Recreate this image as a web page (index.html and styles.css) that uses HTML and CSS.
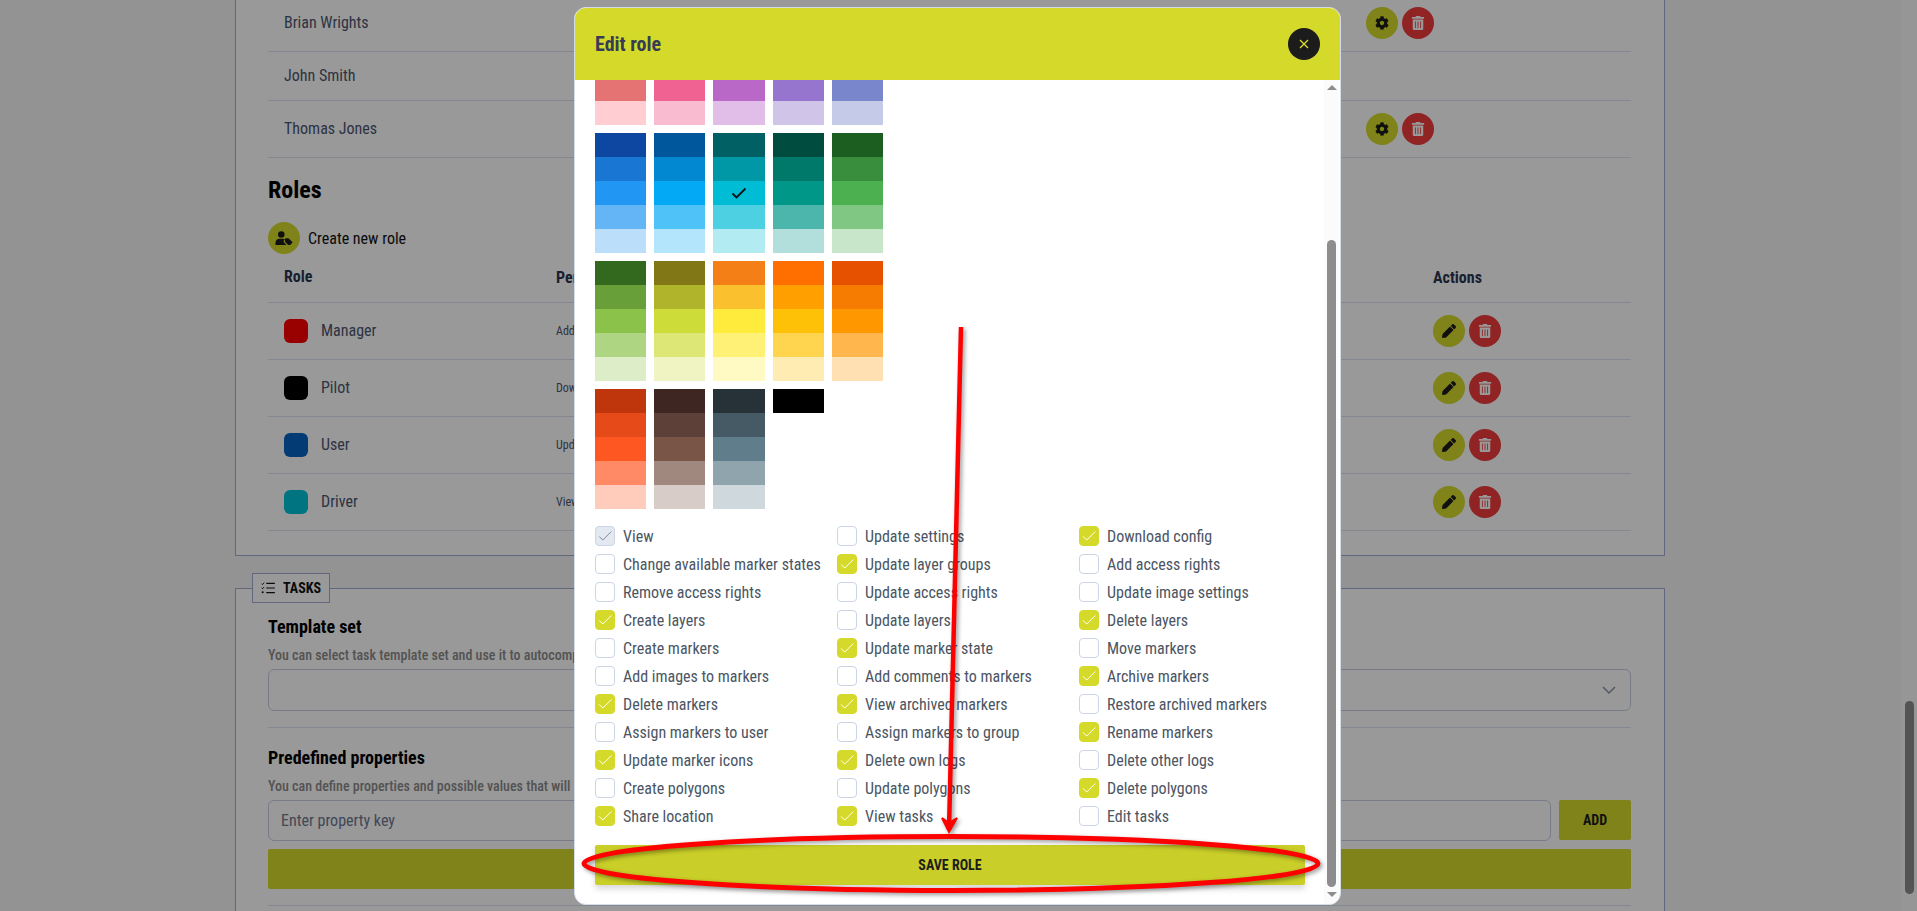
FILE: index.html
```html
<!DOCTYPE html>
<html lang="en">
<head>
  <meta charset="UTF-8" />
  <meta name="viewport" content="width=device-width, initial-scale=1" />
  <title>Edit role</title>
  <link rel="stylesheet" href="styles.css">
</head>
<body>

  <svg class="icon-defs" width="0" height="0">
    <symbol id="i-cog" viewBox="0 0 512 512"><path d="M487.4 315.7l-42.6-24.6c4.3-23.2 4.3-47 0-70.2l42.6-24.6c4.9-2.8 7.1-8.6 5.5-14-11.1-35.6-30-67.8-54.7-94.6-3.8-4.1-10-5.1-14.8-2.3L380.8 110c-17.9-15.4-38.5-27.3-60.8-35.1V25.8c0-5.6-3.9-10.5-9.4-11.7-36.7-8.2-74.3-7.8-109.2 0-5.5 1.2-9.4 6.1-9.4 11.7V75c-22.2 7.9-42.8 19.8-60.8 35.1L88.7 85.5c-4.9-2.8-11-1.9-14.8 2.3-24.7 26.7-43.6 58.9-54.7 94.6-1.7 5.4.6 11.2 5.5 14L67.3 221c-4.3 23.2-4.3 47 0 70.2l-42.6 24.6c-4.9 2.8-7.1 8.6-5.5 14 11.1 35.6 30 67.8 54.7 94.6 3.8 4.1 10 5.1 14.8 2.3l42.6-24.6c17.9 15.4 38.5 27.3 60.8 35.1v49.2c0 5.6 3.9 10.5 9.4 11.7 36.7 8.2 74.3 7.8 109.2 0 5.5-1.2 9.4-6.1 9.4-11.7v-49.2c22.2-7.9 42.8-19.8 60.8-35.1l42.6 24.6c4.9 2.8 11 1.9 14.8-2.3 24.7-26.7 43.6-58.9 54.7-94.6 1.5-5.5-.7-11.3-5.6-14.1zM256 336c-44.1 0-80-35.9-80-80s35.9-80 80-80 80 35.9 80 80-35.9 80-80 80z"/></symbol>
    <symbol id="i-trash" viewBox="0 0 448 512"><path d="M32 464a48 48 0 0 0 48 48h288a48 48 0 0 0 48-48V128H32zm272-256a16 16 0 0 1 32 0v224a16 16 0 0 1-32 0zm-96 0a16 16 0 0 1 32 0v224a16 16 0 0 1-32 0zm-96 0a16 16 0 0 1 32 0v224a16 16 0 0 1-32 0zM432 32H312l-9.4-18.7A24 24 0 0 0 281.1 0H166.8a23.72 23.72 0 0 0-21.4 13.3L136 32H16A16 16 0 0 0 0 48v32a16 16 0 0 0 16 16h416a16 16 0 0 0 16-16V48a16 16 0 0 0-16-16z"/></symbol>
    <symbol id="i-pen" viewBox="0 0 512 512"><path d="M497.9 142.1l-46.1 46.1c-4.7 4.7-12.3 4.7-17 0l-111-111c-4.7-4.7-4.7-12.3 0-17l46.1-46.1c18.7-18.7 49.1-18.7 67.9 0l60.1 60.1c18.8 18.7 18.8 49.1 0 67.9zM284.2 99.8L21.6 362.4.4 483.9c-2.9 16.4 11.4 30.6 27.8 27.8l121.5-21.3 262.6-262.6c4.7-4.7 4.7-12.3 0-17l-111-111c-4.8-4.7-12.4-4.7-17.1 0z"/></symbol>
    <symbol id="i-check" viewBox="0 0 20 20"><path d="M3.5 10.5l4 4L17 5" fill="none" stroke="currentColor" stroke-width="1.1"/></symbol>
  </svg>

  <div class="page">
    <div class="page-main">
      <div class="section section-top">
        <div class="row user-row row-cut">
          <div class="cell-name">Brian Wrights</div>
          <div class="actions">
            <span class="btn-round btn-olive"><svg class="ic"><use href="#i-cog"/></svg></span>
            <span class="btn-round btn-red"><svg class="ic"><use href="#i-trash"/></svg></span>
          </div>
        </div>
        <div class="row user-row row-plain">
          <div class="cell-name">John Smith</div>
        </div>
        <div class="row user-row">
          <div class="cell-name">Thomas Jones</div>
          <div class="actions">
            <span class="btn-round btn-olive"><svg class="ic"><use href="#i-cog"/></svg></span>
            <span class="btn-round btn-red"><svg class="ic"><use href="#i-trash"/></svg></span>
          </div>
        </div>

        <h2 class="roles-title">Roles</h2>
        <div class="create-role">
          <span class="btn-round btn-olive">
            <svg class="ic ic-user" viewBox="0 0 22 18">
              <circle cx="7.5" cy="4.5" r="4.2"/>
              <path d="M0 18v-2.5C0 12 2.5 10 5.5 10h4c1 0 2 .3 2.8.8l-1.2 1.2c-.8.8-.8 2 0 2.8l3 3.2z"/>
              <path d="M12.6 9.2h4.2l4.6 4.6c.5.5.5 1.2 0 1.7l-2.9 2.9c-.5.5-1.2.5-1.7 0l-4.6-4.6z"/>
            </svg>
          </span>
          Create new role
        </div>

        <div class="row role-row role-head">
          <div class="cell-name">Role</div>
          <div>Permissions</div>
          <div>Actions</div>
        </div>
        <div class="row role-row">
          <div class="cell-name cell-role"><span class="role-color role-manager"></span>Manager</div>
          <div class="cell-perm">Add access rights</div>
          <div class="actions">
            <span class="btn-round btn-olive"><svg class="ic"><use href="#i-pen"/></svg></span>
            <span class="btn-round btn-red"><svg class="ic"><use href="#i-trash"/></svg></span>
          </div>
        </div>
        <div class="row role-row">
          <div class="cell-name cell-role"><span class="role-color role-pilot"></span>Pilot</div>
          <div class="cell-perm">Download config</div>
          <div class="actions">
            <span class="btn-round btn-olive"><svg class="ic"><use href="#i-pen"/></svg></span>
            <span class="btn-round btn-red"><svg class="ic"><use href="#i-trash"/></svg></span>
          </div>
        </div>
        <div class="row role-row">
          <div class="cell-name cell-role"><span class="role-color role-user"></span>User</div>
          <div class="cell-perm">Update layers</div>
          <div class="actions">
            <span class="btn-round btn-olive"><svg class="ic"><use href="#i-pen"/></svg></span>
            <span class="btn-round btn-red"><svg class="ic"><use href="#i-trash"/></svg></span>
          </div>
        </div>
        <div class="row role-row">
          <div class="cell-name cell-role"><span class="role-color role-driver"></span>Driver</div>
          <div class="cell-perm">View tasks</div>
          <div class="actions">
            <span class="btn-round btn-olive"><svg class="ic"><use href="#i-pen"/></svg></span>
            <span class="btn-round btn-red"><svg class="ic"><use href="#i-trash"/></svg></span>
          </div>
        </div>
      </div>

      <div class="section section-tasks">
        <div class="legend">
          <svg class="legend-icon" viewBox="0 0 16 14">
            <path d="M.5 2l1 1L3.5.8M.5 7l1 1 2-2.2" fill="none" stroke="currentColor" stroke-width="1.1"/>
            <circle cx="1.8" cy="12" r="1.2"/>
            <path d="M6 1.5h10M6 7h10M6 12.5h10" fill="none" stroke="currentColor" stroke-width="1.4"/>
          </svg>
          TASKS
        </div>
        <h3>Template set</h3>
        <p class="hint">You can select task template set and use it to autocomplete tasks</p>
        <div class="select">
          <svg width="14" height="9" viewBox="0 0 14 9"><path d="M1 1l6 6 6-6" fill="none" stroke="#8a93a8" stroke-width="1.5"/></svg>
        </div>
        <div class="divider"></div>
        <h3 class="h3-next">Predefined properties</h3>
        <p class="hint">You can define properties and possible values that will be used</p>
        <div class="prop-row">
          <input class="prop-input" type="text" placeholder="Enter property key">
          <button class="btn-add">ADD</button>
        </div>
        <div class="btn-wide"></div>
        <div class="divider"></div>
      </div>
    </div>
    <div class="page-scrollbar"><div class="page-thumb"></div></div>
  </div>

  <div class="overlay"></div>

  <div class="modal">
    <div class="modal-head">
      <span class="modal-title">Edit role</span>
      <span class="modal-close">
        <svg width="10" height="10" viewBox="0 0 10 10"><path d="M1 1l8 8M9 1l-8 8" stroke="#d5da2a" stroke-width="1.4"/></svg>
      </span>
    </div>
    <div class="modal-main">
      <div class="modal-body">
        <div class="swatches">
          <div class="swatch sw-red"></div>
          <div class="swatch sw-pink"></div>
          <div class="swatch sw-purple"></div>
          <div class="swatch sw-deep-purple"></div>
          <div class="swatch sw-indigo"></div>
          <div class="swatch sw-blue"></div>
          <div class="swatch sw-light-blue"></div>
          <div class="swatch sw-cyan"><svg class="swatch-check" width="16" height="12" viewBox="0 0 16 12"><path d="M1.5 6.5l4 4L14.5 1.5" fill="none" stroke="#111" stroke-width="1.8"/></svg></div>
          <div class="swatch sw-teal"></div>
          <div class="swatch sw-green"></div>
          <div class="swatch sw-light-green"></div>
          <div class="swatch sw-lime"></div>
          <div class="swatch sw-yellow"></div>
          <div class="swatch sw-amber"></div>
          <div class="swatch sw-orange"></div>
          <div class="swatch sw-deep-orange"></div>
          <div class="swatch sw-brown"></div>
          <div class="swatch sw-blue-grey"></div>
          <div class="swatch-black"></div>
        </div>

        <div class="perms">
          <label class="perm"><span class="box box-off"><svg><use href="#i-check"/></svg></span>View</label>
          <label class="perm"><span class="box"></span>Update settings</label>
          <label class="perm"><span class="box box-on"><svg><use href="#i-check"/></svg></span>Download config</label>

          <label class="perm"><span class="box"></span>Change available marker states</label>
          <label class="perm"><span class="box box-on"><svg><use href="#i-check"/></svg></span>Update layer groups</label>
          <label class="perm"><span class="box"></span>Add access rights</label>

          <label class="perm"><span class="box"></span>Remove access rights</label>
          <label class="perm"><span class="box"></span>Update access rights</label>
          <label class="perm"><span class="box"></span>Update image settings</label>

          <label class="perm"><span class="box box-on"><svg><use href="#i-check"/></svg></span>Create layers</label>
          <label class="perm"><span class="box"></span>Update layers</label>
          <label class="perm"><span class="box box-on"><svg><use href="#i-check"/></svg></span>Delete layers</label>

          <label class="perm"><span class="box"></span>Create markers</label>
          <label class="perm"><span class="box box-on"><svg><use href="#i-check"/></svg></span>Update marker state</label>
          <label class="perm"><span class="box"></span>Move markers</label>

          <label class="perm"><span class="box"></span>Add images to markers</label>
          <label class="perm"><span class="box"></span>Add comments to markers</label>
          <label class="perm"><span class="box box-on"><svg><use href="#i-check"/></svg></span>Archive markers</label>

          <label class="perm"><span class="box box-on"><svg><use href="#i-check"/></svg></span>Delete markers</label>
          <label class="perm"><span class="box box-on"><svg><use href="#i-check"/></svg></span>View archived markers</label>
          <label class="perm"><span class="box"></span>Restore archived markers</label>

          <label class="perm"><span class="box"></span>Assign markers to user</label>
          <label class="perm"><span class="box"></span>Assign markers to group</label>
          <label class="perm"><span class="box box-on"><svg><use href="#i-check"/></svg></span>Rename markers</label>

          <label class="perm"><span class="box box-on"><svg><use href="#i-check"/></svg></span>Update marker icons</label>
          <label class="perm"><span class="box box-on"><svg><use href="#i-check"/></svg></span>Delete own logs</label>
          <label class="perm"><span class="box"></span>Delete other logs</label>

          <label class="perm"><span class="box"></span>Create polygons</label>
          <label class="perm"><span class="box"></span>Update polygons</label>
          <label class="perm"><span class="box box-on"><svg><use href="#i-check"/></svg></span>Delete polygons</label>

          <label class="perm"><span class="box box-on"><svg><use href="#i-check"/></svg></span>Share location</label>
          <label class="perm"><span class="box box-on"><svg><use href="#i-check"/></svg></span>View tasks</label>
          <label class="perm"><span class="box"></span>Edit tasks</label>
        </div>

        <button class="btn-save">SAVE ROLE</button>
      </div>
      <div class="modal-scrollbar">
        <span class="arrow-up"></span>
        <div class="modal-thumb"></div>
        <span class="arrow-down"></span>
      </div>
    </div>
  </div>

  <!-- red marks drawn over the screenshot -->
  <svg class="marks" width="1917" height="911" viewBox="0 0 1917 911">
    <ellipse cx="951" cy="863.5" rx="367" ry="27" fill="none" stroke="#f00" stroke-width="5"/>
    <path d="M961 327L949 830" fill="none" stroke="#f00" stroke-width="4.5"/>
    <path d="M942 818l7 14 8-14-8 5z" fill="#f00" stroke="#f00" stroke-width="2"/>
  </svg>

</body>
</html>
```

FILE: styles.css
```css
* {
  box-sizing: border-box;
}
body {
  margin: 0;
  height: 911px;
  overflow: hidden;
  font-family: Roboto, 'Liberation Sans', sans-serif;
  font-stretch: 75%;
  font-size: 16px;
  color: #4b5670;
  background-color: #f5f5f5;
}
.icon-defs {
  position: absolute;
}

.page {
  display: flex;
  height: 911px;
  overflow: hidden;
}
.page-main {
  flex: 1;
  padding-left: 235px;
}
.page-scrollbar {
  width: 15px;
  background-color: #fafafa;
  padding: 701px 3px 0;
}
.page-thumb {
  height: 193px;
  border-radius: 5px;
  background-color: #8d8d8d;
}

.section {
  width: 1430px;
  background-color: #fff;
  border: 1px solid #a2acd4;
  padding: 0 33px 0 32px;
}
.section-top {
  height: 556px;
  border-top: none;
}
.section-tasks {
  position: relative;
  height: 340px;
  margin-top: 32px;
}

.row {
  display: grid;
  align-items: center;
  border-bottom: 1px solid #dde3ee;
}
.user-row {
  grid-template-columns: 1098px 1fr;
  height: 57px;
}
.row-cut {
  height: 52px;
}
.row-cut .actions,
.row-cut .cell-name {
  margin-top: -5px;
}
.row-plain {
  height: 49px;
}
.role-row {
  grid-template-columns: 288px 877px 1fr;
  height: 57px;
}
.role-head {
  height: 49px;
  padding-bottom: 2px;
  font-weight: 700;
  color: #2b3550;
}
.cell-name {
  padding: 0 0 2px 16px;
}
.cell-role {
  display: flex;
  align-items: center;
  gap: 13px;
}
.cell-perm {
  font-size: 12px;
}
.role-color {
  width: 24px;
  height: 24px;
  margin-top: 2px;
  border-radius: 6px;
}
.role-manager { background-color: #ff0000; }
.role-pilot { background-color: #000; }
.role-user { background-color: #0563c4; }
.role-driver { background-color: #00c4d8; }

.actions {
  display: flex;
  gap: 4px;
}
.btn-round {
  display: flex;
  align-items: center;
  justify-content: center;
  flex: none;
  width: 32px;
  height: 32px;
  border-radius: 50%;
}
.btn-olive {
  background-color: #d5da2a;
  color: #1c1c1c;
  fill: #1c1c1c;
}
.btn-red {
  background-color: #f03d3d;
  fill: #fff;
}
.ic {
  width: 14px;
  height: 14px;
}
.ic-user {
  width: 18px;
}

.roles-title {
  margin: 0;
  padding-top: 19px;
  height: 64px;
  font-size: 24px;
  line-height: 26px;
  font-weight: 700;
  color: #000;
}
.create-role {
  display: flex;
  align-items: center;
  gap: 8px;
  color: #111;
}

.legend {
  position: absolute;
  top: -16px;
  left: 16px;
  display: flex;
  align-items: center;
  gap: 8px;
  height: 30px;
  padding: 0 8px;
  background-color: #fff;
  border: 1px solid #a2acd4;
  font-size: 14px;
  font-weight: 700;
  color: #111;
}
.legend-icon {
  width: 14px;
  height: 12px;
  fill: currentColor;
}

h3 {
  margin: 0;
  padding-top: 26px;
  font-size: 18px;
  line-height: 24px;
  font-weight: 700;
  color: #000;
}
.h3-next {
  padding-top: 18px;
}
.hint {
  margin: 7px 0 5px;
  font-size: 14px;
  line-height: 18px;
  font-weight: 500;
  color: #8a8a8a;
}
.select {
  display: flex;
  align-items: center;
  justify-content: flex-end;
  height: 42px;
  padding-right: 14px;
  border: 1px solid #c6cfe2;
  border-radius: 6px;
}
.divider {
  height: 1px;
  margin-top: 16px;
  background-color: #dde3ee;
}
.prop-row {
  display: flex;
  gap: 8px;
}
.prop-input {
  flex: 1;
  height: 41px;
  padding: 0 12px;
  border: 1px solid #c6cfe2;
  border-radius: 6px;
  font: inherit;
  font-stretch: 75%;
}
.prop-input::placeholder {
  color: #6d7890;
}
.btn-add {
  width: 72px;
  height: 40px;
  border: none;
  border-radius: 2px;
  background-color: #d5da2a;
  font-family: inherit;
  font-stretch: 75%;
  font-size: 14px;
  font-weight: 700;
  color: #1c1c1c;
}
.btn-wide {
  height: 40px;
  margin-top: 8px;
  border-radius: 2px;
  background-color: #d5da2a;
}

.overlay {
  position: fixed;
  inset: 0;
  background-color: rgba(0, 0, 0, .4);
}

.modal {
  position: fixed;
  left: 574px;
  top: 7px;
  width: 767px;
  height: 898px;
  display: flex;
  flex-direction: column;
  overflow: hidden;
  background-color: #fff;
  border: 1px solid #d4dbe9;
  border-radius: 12px;
}
.modal-head {
  display: flex;
  align-items: center;
  justify-content: space-between;
  flex: none;
  height: 72px;
  padding: 0 20px;
  background-color: #d5da2a;
}
.modal-title {
  font-size: 20px;
  font-weight: 700;
  color: #363d54;
}
.modal-close {
  display: flex;
  align-items: center;
  justify-content: center;
  width: 32px;
  height: 32px;
  border-radius: 50%;
  background-color: #1c1c1c;
}
.modal-main {
  display: flex;
  flex: 1;
  min-height: 0;
}
.modal-body {
  flex: 1;
  overflow: hidden;
  padding-left: 20px;
}
.modal-scrollbar {
  display: flex;
  flex-direction: column;
  align-items: center;
  width: 15px;
  margin-right: 1px;
  background-color: #fbfbfb;
}
.arrow-up,
.arrow-down {
  flex: none;
  width: 0;
  height: 0;
  border-left: 5px solid transparent;
  border-right: 5px solid transparent;
}
.arrow-up {
  margin-top: 5px;
  border-bottom: 5px solid #8d8d8d;
}
.arrow-down {
  margin-top: 5px;
  border-top: 5px solid #8d8d8d;
}
.modal-thumb {
  width: 9px;
  height: 647px;
  margin-top: 150px;
  border-radius: 5px;
  background-color: #8d8d8d;
}

.swatches {
  display: grid;
  grid-template-columns: repeat(5, 51.2px);
  gap: 8px;
  margin-top: -75px;
}
.swatch {
  position: relative;
  height: 120px;
}
.swatch-check {
  position: absolute;
  top: 54px;
  left: 18px;
}
.swatch-black {
  height: 24px;
  background-color: #000;
}
.sw-red { background: linear-gradient(#b71c1c 20%, #d32f2f 0 40%, #f44336 0 60%, #e57373 0 80%, #ffcdd2 0); }
.sw-pink { background: linear-gradient(#880e4f 20%, #c2185b 0 40%, #e91e63 0 60%, #f06292 0 80%, #f8bbd0 0); }
.sw-purple { background: linear-gradient(#4a148c 20%, #7b1fa2 0 40%, #9c27b0 0 60%, #ba68c8 0 80%, #e1bee7 0); }
.sw-deep-purple { background: linear-gradient(#311b92 20%, #512da8 0 40%, #673ab7 0 60%, #9575cd 0 80%, #d1c4e9 0); }
.sw-indigo { background: linear-gradient(#1a237e 20%, #303f9f 0 40%, #3f51b5 0 60%, #7986cb 0 80%, #c5cae9 0); }
.sw-blue { background: linear-gradient(#0d47a1 20%, #1976d2 0 40%, #2196f3 0 60%, #64b5f6 0 80%, #bbdefb 0); }
.sw-light-blue { background: linear-gradient(#01579b 20%, #0288d1 0 40%, #03a9f4 0 60%, #4fc3f7 0 80%, #b3e5fc 0); }
.sw-cyan { background: linear-gradient(#006064 20%, #0097a7 0 40%, #00bcd4 0 60%, #4dd0e1 0 80%, #b2ebf2 0); }
.sw-teal { background: linear-gradient(#004d40 20%, #00796b 0 40%, #009688 0 60%, #4db6ac 0 80%, #b2dfdb 0); }
.sw-green { background: linear-gradient(#1b5e20 20%, #388e3c 0 40%, #4caf50 0 60%, #81c784 0 80%, #c8e6c9 0); }
.sw-light-green { background: linear-gradient(#33691e 20%, #689f38 0 40%, #8bc34a 0 60%, #aed581 0 80%, #dcedc8 0); }
.sw-lime { background: linear-gradient(#827717 20%, #afb42b 0 40%, #cddc39 0 60%, #dce775 0 80%, #f0f4c3 0); }
.sw-yellow { background: linear-gradient(#f57f17 20%, #fbc02d 0 40%, #ffeb3b 0 60%, #fff176 0 80%, #fff9c4 0); }
.sw-amber { background: linear-gradient(#ff6f00 20%, #ffa000 0 40%, #ffc107 0 60%, #ffd54f 0 80%, #ffecb3 0); }
.sw-orange { background: linear-gradient(#e65100 20%, #f57c00 0 40%, #ff9800 0 60%, #ffb74d 0 80%, #ffe0b2 0); }
.sw-deep-orange { background: linear-gradient(#bf360c 20%, #e64a19 0 40%, #ff5722 0 60%, #ff8a65 0 80%, #ffccbc 0); }
.sw-brown { background: linear-gradient(#3e2723 20%, #5d4037 0 40%, #795548 0 60%, #a1887f 0 80%, #d7ccc8 0); }
.sw-blue-grey { background: linear-gradient(#263238 20%, #455a64 0 40%, #607d8b 0 60%, #90a4ae 0 80%, #cfd8dc 0); }

.perms {
  display: grid;
  grid-template-columns: repeat(3, 242px);
  grid-auto-rows: 28px;
  margin-top: 13px;
}
.perm {
  display: flex;
  align-items: center;
  gap: 8px;
  font-size: 16px;
  color: #4b5563;
  white-space: nowrap;
}
.box {
  flex: none;
  width: 20px;
  height: 20px;
  border: 1px solid #cbd5e6;
  border-radius: 4px;
  background-color: #fff;
}
.box svg {
  display: block;
  width: 18px;
  height: 18px;
}
.box-on {
  border-color: #d5da2a;
  background-color: #d5da2a;
  color: #fff;
}
.box-off {
  background-color: #e4e9f1;
  color: #7d8699;
}
.btn-save {
  display: block;
  width: 710px;
  height: 40px;
  margin-top: 15px;
  border: none;
  border-radius: 2px;
  background-color: #c9ce28;
  box-shadow: 0 4px 6px rgba(0, 0, 0, .15);
  font-family: inherit;
  font-stretch: 75%;
  font-size: 14px;
  font-weight: 700;
  color: #1c1c1c;
}

.marks {
  position: fixed;
  left: 0;
  top: 0;
  filter: drop-shadow(2px 2px 2px rgba(0, 0, 0, .4));
}
```
